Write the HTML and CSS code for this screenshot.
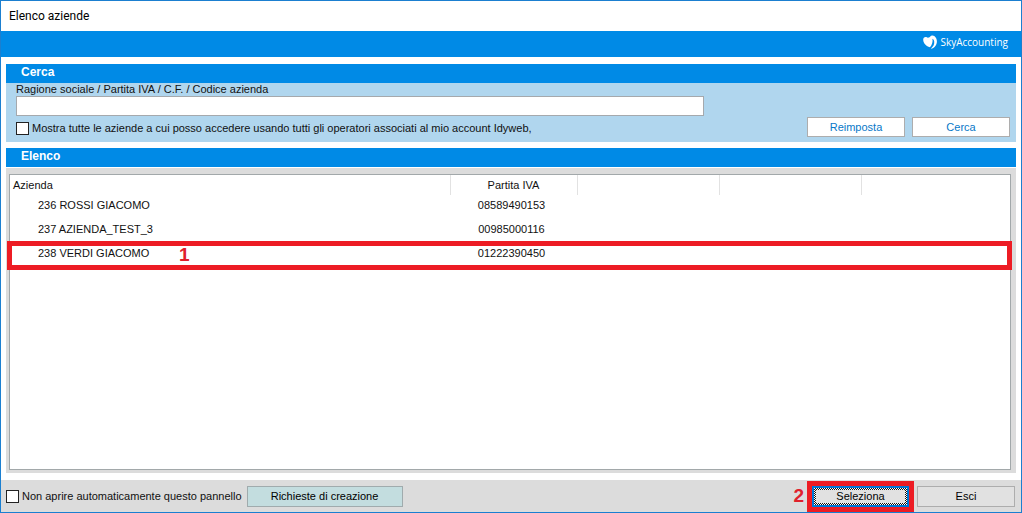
FILE: index.html
```html
<!DOCTYPE html>
<html lang="it">
<head>
<meta charset="utf-8">
<title>Elenco aziende</title>
<link rel="stylesheet" href="styles.css">
</head>
<body>
<div class="window">
  <header class="titlebar">Elenco aziende</header>
  <div class="brandbar">
    <svg class="logo" viewBox="0 0 14 14" aria-hidden="true">
      <path fill="#fff" d="M0.2 5C0 3 1.6 1.6 3.2 2C4.4 2.3 4.8 3 5.8 2.6C7 2 7.6 0.2 9.4 0.4C12.2 0.7 13.9 3.2 13.9 6.4C13.9 10 11.4 13 7.8 13.8C10.2 11.8 11.6 9.4 11.2 6.6C11 5.2 10.4 4.4 9.4 3.8C10 6.8 9.2 9.6 7 12.2C5 12 2.6 10.4 1.4 8.6C0.6 7.4 0.3 6.2 0.2 5Z"/>
    </svg>
    <span class="brand">SkyAccounting</span>
  </div>
  <main class="content">
    <section>
      <h2 class="heading">Cerca</h2>
      <form class="search">
        <label class="search-label" for="query">Ragione sociale / Partita IVA / C.F. / Codice azienda</label>
        <input class="query" id="query" type="text">
        <label class="check"><input type="checkbox">Mostra tutte le aziende a cui posso accedere usando tutti gli operatori associati al mio account Idyweb,</label>
        <div class="search-actions">
          <button class="btn btn-light" type="reset">Reimposta</button>
          <button class="btn btn-light" type="button">Cerca</button>
        </div>
      </form>
    </section>
    <section class="list-panel">
      <h2 class="heading">Elenco</h2>
      <div class="list-frame">
        <div class="list">
          <table class="companies">
            <colgroup><col class="col-name"><col class="col-vat"><col class="col-blank"><col class="col-blank"><col></colgroup>
            <thead>
              <tr><th>Azienda</th><th>Partita IVA</th><th></th><th></th><th></th></tr>
            </thead>
            <tbody>
              <tr><td>236 ROSSI GIACOMO</td><td>08589490153</td><td></td><td></td><td></td></tr>
              <tr><td>237 AZIENDA_TEST_3</td><td>00985000116</td><td></td><td></td><td></td></tr>
              <tr class="marked"><td>238 VERDI GIACOMO<span class="step step-row">1</span></td><td>01222390450</td><td></td><td></td><td></td></tr>
            </tbody>
          </table>
        </div>
      </div>
    </section>
  </main>
  <footer class="footer">
    <label class="check"><input type="checkbox">Non aprire automaticamente questo pannello</label>
    <button class="btn btn-request" type="button">Richieste di creazione</button>
    <div class="footer-actions">
      <span class="step">2</span>
      <div class="callout"><button class="btn btn-select" type="button"><span class="dither">Seleziona</span></button></div>
      <button class="btn btn-exit" type="button">Esci</button>
    </div>
  </footer>
</div>
</body>
</html>
```
FILE: styles.css
```css
* { box-sizing: border-box; }

body {
  margin: 0;
  font: 11px/13px "Liberation Sans", Arial, sans-serif;
  color: #111;
  background: #fff;
}

.window {
  display: flex;
  flex-direction: column;
  min-height: 100vh;
  border: 1px solid #1b7fd0;
}

.titlebar {
  padding: 0 8px;
  font: 12px/30px Roboto, sans-serif;
  color: #000;
}

.brandbar {
  display: flex;
  align-items: center;
  justify-content: flex-end;
  gap: 3px;
  height: 26px;
  padding: 0 13px 4px;
  background: #008ae6;
  color: #fff;
}

.logo { width: 14px; height: 14px; }
.brand { font: 10px/14px "Open Sans", sans-serif; }

.content {
  display: flex;
  flex: 1;
  flex-direction: column;
  gap: 6px;
  padding: 7px 5px;
}

.heading {
  margin: 0;
  padding: 0 15px 2px;
  font: bold 12px/17px "Liberation Sans", Arial, sans-serif;
  color: #fff;
  background: #008ae6;
}

.search {
  display: grid;
  grid-template-columns: 1fr auto;
  column-gap: 103px;
  padding: 0 6px 5px 10px;
  background: #b0d6ee;
}

.search-label { grid-column: 1 / -1; }

.query {
  grid-column: 1;
  width: 100%;
  height: 20px;
  padding: 0 4px;
  border: 1px solid #a5a9ad;
  background: #fff;
  font: inherit;
}

.check {
  grid-column: 1;
  display: flex;
  align-items: center;
  gap: 3px;
  white-space: nowrap;
}

.search .check { padding-top: 4px; }

.check input {
  appearance: none;
  flex: none;
  width: 13px;
  height: 13px;
  margin: 0;
  border: 1px solid #222;
  background: #fff;
}

.search-actions {
  grid-column: 2;
  display: flex;
  gap: 7px;
  padding-top: 1px;
}

.btn {
  height: 21px;
  padding: 0;
  border: 1px solid #adadad;
  background: #e1e1e1;
  font: inherit;
  color: #000;
}

.btn-light {
  width: 98px;
  height: 20px;
  background: #fff;
  color: #0878c8;
}

.list-panel {
  display: flex;
  flex: 1;
  flex-direction: column;
}

.list-frame {
  display: flex;
  flex: 1;
  margin-top: 1px;
  padding: 6px 5px 3px 3px;
  background: #dcdcdc;
}

.list {
  flex: 1;
  border: 1px solid #a2a8aa;
  background: #fff;
}

.companies {
  width: 100%;
  table-layout: fixed;
  border-collapse: collapse;
}

.col-name { width: 440px; }
.col-vat { width: 127px; }
.col-blank { width: 142px; }

.companies th {
  height: 20px;
  padding: 1px 3px 0;
  border-right: 1px solid #e2e2e2;
  font-weight: normal;
}

.companies th:first-child { text-align: left; }
.companies th:last-child { border-right: 0; }

.companies td {
  height: 24px;
  padding: 0 4px 4px 0;
  text-align: center;
}

.companies td:first-child {
  padding-left: 28px;
  text-align: left;
}

.marked { position: relative; }

.marked::after {
  content: "";
  position: absolute;
  inset: -2px -2px -3px -3px;
  border: 5px solid #ed1c24;
}

.step {
  font: bold 19px/16px "Liberation Sans", Arial, sans-serif;
  color: #e0202c;
}

.step-row {
  position: absolute;
  top: 4px;
  left: 169px;
}

.footer {
  display: flex;
  align-items: center;
  height: 32px;
  padding-left: 5px;
  background: #dcdcdc;
}

.btn-request {
  width: 156px;
  margin-left: 5px;
  border-color: #a0abad;
  background: #c3dddf;
}

.footer-actions {
  display: flex;
  align-items: center;
  gap: 3px;
  margin-left: auto;
  padding-right: 6px;
}

.callout {
  display: flex;
  border: 5px solid #ed1c24;
}

.btn-select {
  width: 97px;
  padding: 2px;
  border: 2px solid #0078d7;
  background: repeating-conic-gradient(#111 0 25%, #fff 0 50%) 0 0 / 2px 2px;
}

.dither {
  display: block;
  background: #e1e1e1;
}

.btn-exit { width: 98px; }
```
